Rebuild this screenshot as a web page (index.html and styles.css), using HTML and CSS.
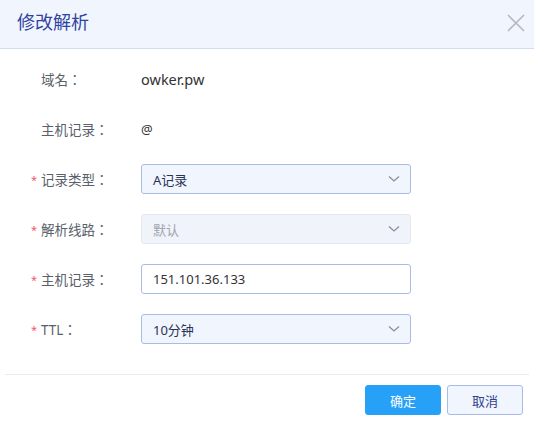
FILE: index.html
```html
<!DOCTYPE html>
<html>
<head>
<meta charset="utf-8">
<link rel="stylesheet" href="styles.css">
</head>
<body>
<div class="dialog">
  <div class="header">
    <span class="title">修改解析</span>
    <svg class="close" width="20" height="20" viewBox="0 0 20 20"><path d="M2 2L18 18M18 2L2 18" stroke="#b8b8b8" stroke-width="1.6" fill="none"/></svg>
  </div>
  <div class="body">
    <div class="row"><label class="label"><span class="req hide">*</span>域名：</label><span class="value domain">owker.pw</span></div>
    <div class="row"><label class="label"><span class="req hide">*</span>主机记录：</label><span class="value">@</span></div>
    <div class="row"><label class="label"><span class="req">*</span>记录类型：</label><div class="field select"><span>A记录</span><svg class="chev" width="12" height="8" viewBox="0 0 12 8"><path d="M1 1.5L6 6L11 1.5" stroke="#8a8f9c" stroke-width="1.3" fill="none"/></svg></div></div>
    <div class="row"><label class="label"><span class="req">*</span>解析线路：</label><div class="field select disabled"><span>默认</span><svg class="chev" width="12" height="8" viewBox="0 0 12 8"><path d="M1 1.5L6 6L11 1.5" stroke="#8a8f9c" stroke-width="1.3" fill="none"/></svg></div></div>
    <div class="row"><label class="label"><span class="req">*</span>主机记录：</label><div class="field input"><span>151.101.36.133</span></div></div>
    <div class="row"><label class="label"><span class="req">*</span>TTL：</label><div class="field select"><span>10分钟</span><svg class="chev" width="12" height="8" viewBox="0 0 12 8"><path d="M1 1.5L6 6L11 1.5" stroke="#8a8f9c" stroke-width="1.3" fill="none"/></svg></div></div>
  </div>
  <div class="footer">
    <button class="btn primary">确定</button>
    <button class="btn default">取消</button>
  </div>
</div>
</body>
</html>
```
FILE: styles.css
```css
* { box-sizing: border-box; }
html, body { margin: 0; padding: 0; background: #fff; }
body { font-family: "Noto Sans", "Noto Sans CJK SC", sans-serif; width: 534px; height: 423px; overflow: hidden; }
.dialog { width: 534px; }
.header {
  height: 49px;
  background: #f0f5fe;
  border-bottom: 1px solid #cfdcf3;
  display: flex;
  align-items: center;
  justify-content: space-between;
  padding: 0 8px 0 17px;
}
.title { font-size: 18px; color: #2f43a0; line-height: 1; margin-top: -4px; }
.close { display: block; margin-top: -2px; }
.body {
  padding: 15px 0 30px 0;
  display: flex;
  flex-direction: column;
  gap: 20px;
}
.row { height: 30px; display: flex; align-items: center; }
.label {
  width: 141px;
  padding-left: 31px;
  font-family: "Noto Sans", "Noto Sans CJK TC", sans-serif;
  font-size: 13.5px;
  color: #5a5f6b;
  display: flex;
  align-items: center;
}
.req { display: inline-block; width: 10px; color: #f05a6a; font-size: 11px; }
.req.hide { visibility: hidden; }
.value { font-size: 13px; color: #333; }
.value.domain { font-size: 14.5px; }
.field {
  width: 270px;
  height: 30px;
  border: 1px solid #a9bce6;
  border-radius: 3px;
  display: flex;
  align-items: center;
  justify-content: space-between;
  padding: 0 10px 0 11px;
  font-size: 13px;
  color: #2b3354;
}
.select { background: #f0f5fe; }
.input { background: #fff; color: #333; }
.disabled { background: #f0f3fa; border-color: #e3e8f2; color: #a0a4ae; }
.chev { display: block; }
.footer {
  margin: 0 5px;
  border-top: 1px solid #ebebeb;
  padding: 10px 6px 8px 0;
  display: flex;
  justify-content: flex-end;
  gap: 6px;
}
.btn {
  width: 76px;
  height: 30px;
  border-radius: 3px;
  font-family: "Noto Sans", "Noto Sans CJK SC", sans-serif;
  font-size: 13px;
  padding: 0;
  cursor: pointer;
}
.primary { background: #27a0f8; border: 1px solid #27a0f8; color: #fff; }
.default { background: #f0f5fe; border: 1px solid #a9bce6; color: #2f3f8c; }
```
